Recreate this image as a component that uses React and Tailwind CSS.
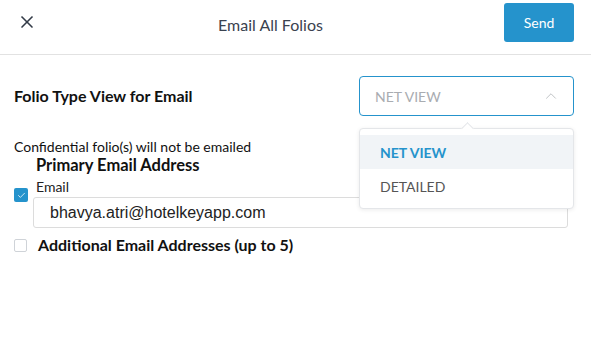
import { X, ChevronUp, Check } from 'lucide-react';

export default function App() {
  return (
    <div className="relative w-[591px] h-[340px] bg-white overflow-hidden" style={{ fontFamily: 'Lato, "Noto Sans", sans-serif' }}>
      {/* header */}
      <div className="flex items-center h-[55px] border-b border-[#e2e2e2] pl-[17px] pr-[17px]">
        <X className="w-[20px] h-[20px] text-[#333b47] -mt-[10px]" strokeWidth={2} />
        <div className="flex-1 text-center text-[16px] text-[#3a4250] -mt-[5px]">Email All Folios</div>
        <button className="w-[70px] h-[39px] -mt-[9px] rounded-[3px] bg-[#2593cc] text-white text-[14px]">Send</button>
      </div>

      <div className="px-[14px]">
        <div className="flex items-center justify-between mt-[21px] pr-[3px]">
          <div className="text-[16px] font-bold text-[#111]">Folio Type View for Email</div>
          <div className="flex items-center justify-between w-[215px] h-[40px] border border-[#2593cc] rounded-[4px] pl-[15px] pr-[13px]">
            <span className="text-[14px] text-[#a9acb1]">NET VIEW</span>
            <ChevronUp className="w-[18px] h-[18px] text-[#b9bcc0]" strokeWidth={1.2} />
          </div>
        </div>

        <div className="mt-[23px] text-[14px] leading-[16px] text-[#111]">Confidential folio(s) will not be emailed</div>
        <div className="ml-[22px] text-[16.5px] leading-[20px] font-bold text-[#111]">Primary Email Address</div>

        <div className="flex mt-[2px]">
          <div className="w-[14px] h-[14px] mt-[11px] rounded-[2px] bg-[#2593cc] flex items-center justify-center shrink-0">
            <Check className="w-[9px] h-[9px] text-white" strokeWidth={2} />
          </div>
          <div className="flex flex-col ml-[5px]">
            <div className="ml-[3px] text-[14px] leading-[20px] text-[#222]">Email</div>
            <div className="w-[535px] h-[31px] border border-[#dcdcdc] rounded-[3px] flex items-center pl-[16px] text-[16px] text-[#222]" style={{ fontFamily: '"Liberation Sans", Arial, sans-serif' }}>
              bhavya.atri@hotelkeyapp.com
            </div>
          </div>
        </div>

        <div className="flex items-center mt-[7px]">
          <div className="w-[13px] h-[13px] rounded-[2px] border border-[#cfd3d8] bg-white shrink-0" />
          <div className="ml-[11px] text-[16px] font-bold text-[#111] leading-[20px]">Additional Email Addresses (up to 5)</div>
        </div>
      </div>

      {/* dropdown menu */}
      <div className="absolute left-[359px] top-[128px] w-[215px] h-[81px] bg-white rounded-[4px] border border-[#e4e6e9] shadow-[0_1px_4px_rgba(0,0,0,0.08)] pt-[6px]">
        <div className="absolute -top-[5px] left-[103px] w-[9px] h-[9px] bg-white border-l border-t border-[#e4e6e9] rotate-45" />
        <div className="relative h-[34px] bg-[#f1f4f7] flex items-center pl-[20px] text-[14px] font-bold text-[#2593cc]">NET VIEW</div>
        <div className="h-[34px] flex items-center pl-[20px] text-[14px] text-[#555]">DETAILED</div>
      </div>
    </div>
  );
}
